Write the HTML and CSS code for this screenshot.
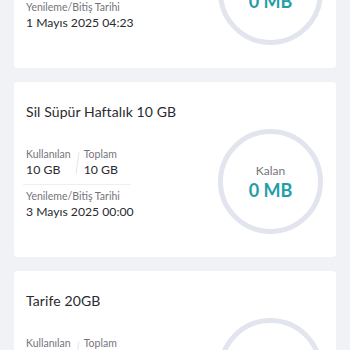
FILE: index.html
```html
<!DOCTYPE html>
<html lang="tr">
<head>
<meta charset="utf-8">
<link rel="stylesheet" href="styles.css">
</head>
<body>
<div class="list">
  <div class="card">
    <div class="title">Günlük 1 GB</div>
    <div class="body">
      <div class="info">
        <div class="pair">
          <div class="col"><div class="label">Kullanılan</div><div class="value">1 GB</div></div>
          <div class="slash"></div>
          <div class="col"><div class="label">Toplam</div><div class="value">1 GB</div></div>
        </div>
        <div class="divider"></div>
        <div class="label">Yenileme/Bitiş Tarihi</div>
        <div class="date">1 Mayıs 2025 04:23</div>
      </div>
      <div class="ring"><div class="ring-label">Kalan</div><div class="ring-value">0 MB</div></div>
    </div>
  </div>
  <div class="card">
    <div class="title">Sil Süpür Haftalık 10 GB</div>
    <div class="body">
      <div class="info">
        <div class="pair">
          <div class="col"><div class="label">Kullanılan</div><div class="value">10 GB</div></div>
          <div class="slash"></div>
          <div class="col"><div class="label">Toplam</div><div class="value">10 GB</div></div>
        </div>
        <div class="divider"></div>
        <div class="label">Yenileme/Bitiş Tarihi</div>
        <div class="date">3 Mayıs 2025 00:00</div>
      </div>
      <div class="ring"><div class="ring-label">Kalan</div><div class="ring-value">0 MB</div></div>
    </div>
  </div>
  <div class="card">
    <div class="title">Tarife 20GB</div>
    <div class="body">
      <div class="info">
        <div class="pair">
          <div class="col"><div class="label">Kullanılan</div><div class="value">20 GB</div></div>
          <div class="slash"></div>
          <div class="col"><div class="label">Toplam</div><div class="value">20 GB</div></div>
        </div>
        <div class="divider"></div>
        <div class="label">Yenileme/Bitiş Tarihi</div>
        <div class="date">5 Mayıs 2025 00:00</div>
      </div>
      <div class="ring"><div class="ring-label">Kalan</div><div class="ring-value">0 MB</div></div>
    </div>
  </div>
</div>
</body>
</html>
```
FILE: styles.css
```css
html, body {
  margin: 0;
  padding: 0;
  background: #f1f2f6;
  overflow: hidden;
  font-family: Lato, "Noto Sans", sans-serif;
}
.list {
  display: flex;
  flex-direction: column;
  gap: 14px;
  padding: 0 14px;
  margin-top: -107px;
}
.card {
  background: #fff;
  border-radius: 3px;
  padding: 20px 13px 23px 12px;
  box-shadow: 0 0 1px rgba(0,0,0,0.04);
}
.title {
  font-size: 14px;
  line-height: 20px;
  color: #2a2a30;
  letter-spacing: 0.1px;
}
.body {
  display: flex;
  justify-content: space-between;
  align-items: flex-start;
  margin-top: 7px;
}
.info {
  display: flex;
  flex-direction: column;
  align-items: flex-start;
  padding-top: 18px;
}
.pair {
  display: flex;
  align-items: center;
}
.col { display: flex; flex-direction: column; }
.slash {
  width: 1px;
  height: 22px;
  background: #e4e5ea;
  transform: rotate(8deg);
  margin: 0 6px 0 6px;
}
.label {
  font-size: 10.5px;
  line-height: 15px;
  color: #75757c;
  white-space: nowrap;
}
.value {
  font-size: 12.3px;
  line-height: 16px;
  color: #2a2a30;
  white-space: nowrap;
}
.divider {
  width: 108px;
  height: 1px;
  background: #eeeff2;
  margin: 6px 0 4px -3px;
}
.date {
  font-size: 12.2px;
  line-height: 15px;
  color: #2a2a30;
  white-space: nowrap;
}
.ring {
  width: 95px;
  height: 95px;
  border: 5px solid #e2e4ee;
  border-radius: 50%;
  display: flex;
  flex-direction: column;
  align-items: center;
  justify-content: center;
}
.ring-label {
  font-size: 12px;
  line-height: 16px;
  color: #75757c;
}
.ring-value {
  font-size: 18px;
  line-height: 22px;
  font-weight: 700;
  color: #1f9ea6;
}
```
